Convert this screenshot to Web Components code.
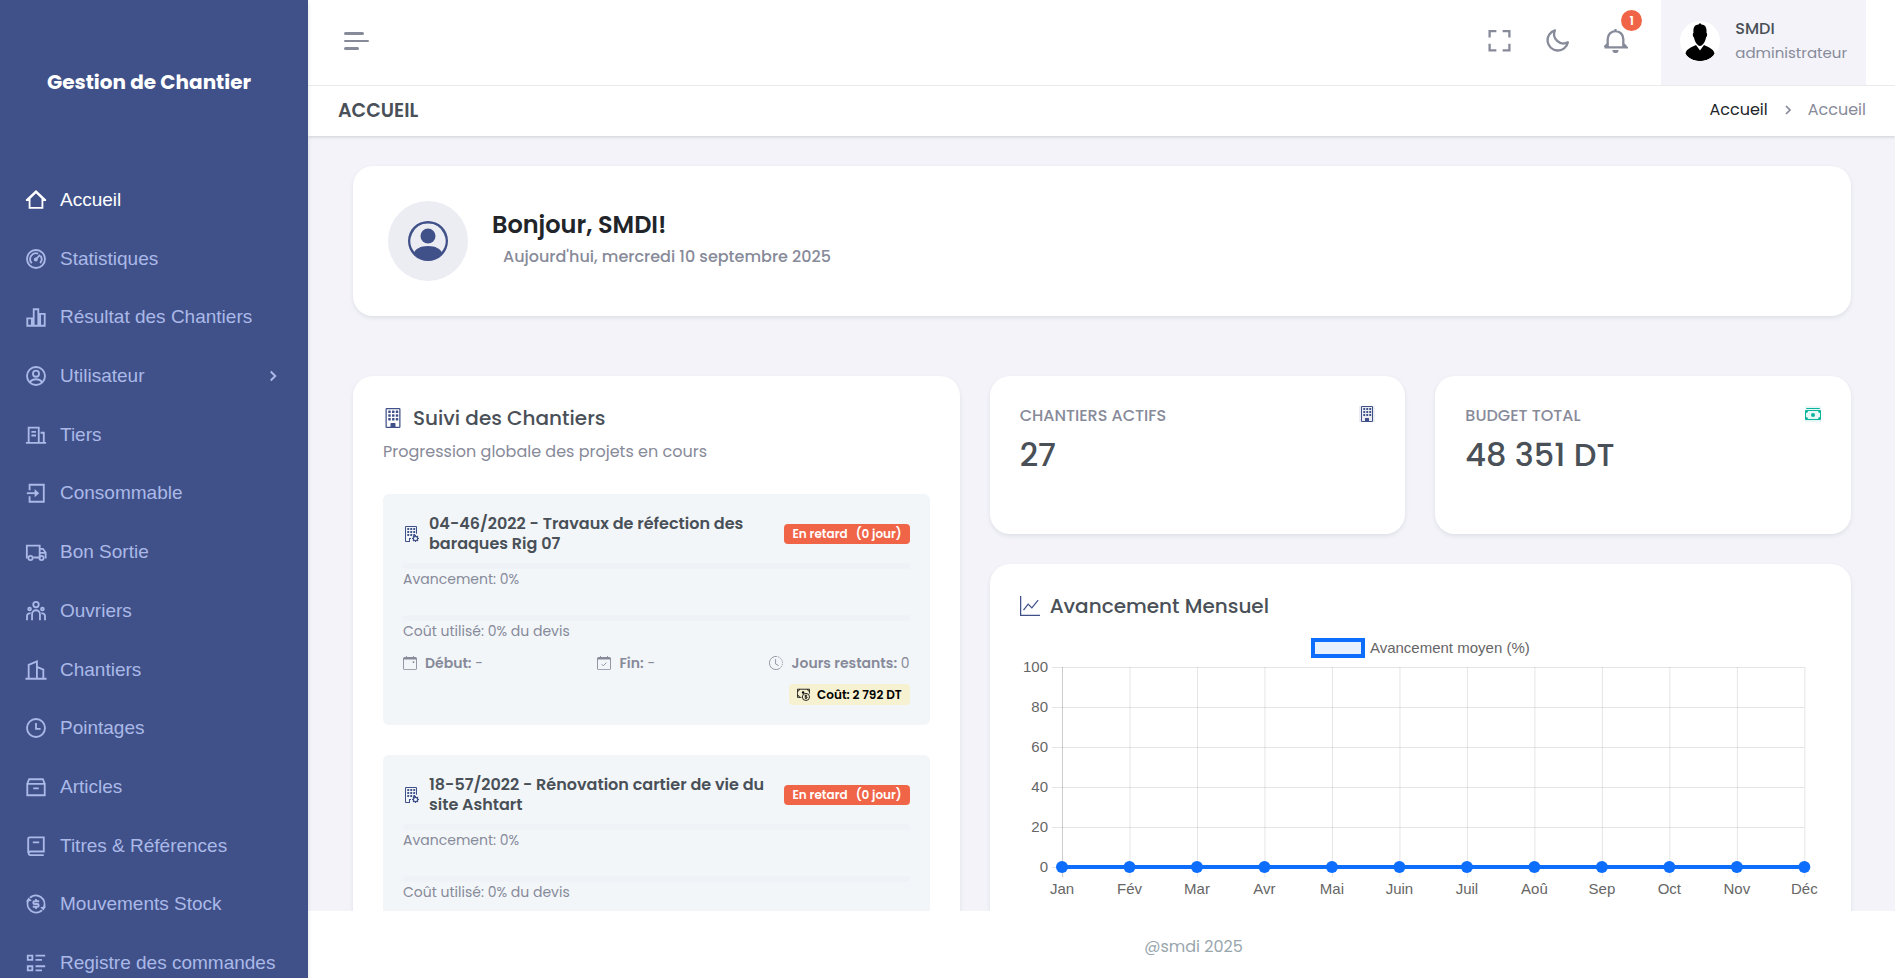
<!DOCTYPE html>
<html lang="fr">
<head>
<meta charset="utf-8">
<meta name="viewport" content="width=device-width, initial-scale=1">
<title>Gestion de Chantier - Accueil</title>
<style>
  :root {
    --primary: #405189;
    --muted: #878a99;
    --heading: #495057;
    --danger: #f06548;
    --success: #0ab39c;
    --surface: #ffffff;
    --page: #f3f3f9;
  }
  html, body { height: 100%; }
  body {
    margin: 0;
    font-family: Poppins, Inter, "Noto Sans", sans-serif;
    font-size: 16px;
    color: #212529;
    background: var(--page);
    overflow: hidden;
  }
</style>
</head>
<body>
<app-shell>
  <side-nav slot="nav" brand="Gestion de Chantier">
    <nav-item icon="home" active>Accueil</nav-item>
    <nav-item icon="dashboard">Statistiques</nav-item>
    <nav-item icon="bars">Résultat des Chantiers</nav-item>
    <nav-item icon="account" expandable>Utilisateur</nav-item>
    <nav-item icon="building4">Tiers</nav-item>
    <nav-item icon="login">Consommable</nav-item>
    <nav-item icon="truck">Bon Sortie</nav-item>
    <nav-item icon="team">Ouvriers</nav-item>
    <nav-item icon="building2">Chantiers</nav-item>
    <nav-item icon="time">Pointages</nav-item>
    <nav-item icon="archive">Articles</nav-item>
    <nav-item icon="book">Titres &amp; Références</nav-item>
    <nav-item icon="exchange">Mouvements Stock</nav-item>
    <nav-item icon="list">Registre des commandes</nav-item>
  </side-nav>

  <top-bar slot="header" user="SMDI" role-name="administrateur" notifications="1"></top-bar>
  <page-title slot="header" heading="ACCUEIL">
    <a slot="crumb" href="#">Accueil</a>
    <span>Accueil</span>
  </page-title>

  <welcome-card heading="Bonjour, SMDI!">Aujourd'hui, mercredi 10 septembre 2025</welcome-card>

  <dash-grid>
    <ui-card slot="main" icon="building" heading="Suivi des Chantiers" subtitle="Progression globale des projets en cours">
      <site-item heading="04-46/2022 - Travaux de réfection des baraques Rig 07" progress="0" spent="0" cost="2 792 DT"></site-item>
      <site-item heading="18-57/2022 - Rénovation cartier de vie du site Ashtart" progress="0" spent="0" cost="0 DT"></site-item>
    </ui-card>
    <stat-card slot="stat" icon="building" label="CHANTIERS ACTIFS">27</stat-card>
    <stat-card slot="stat" icon="cashstack" tone="success" label="BUDGET TOTAL">48 351 DT</stat-card>
    <ui-card slot="side" icon="graph" heading="Avancement Mensuel">
      <line-chart label="Avancement moyen (%)"
        categories="Jan,Fév,Mar,Avr,Mai,Juin,Juil,Aoû,Sep,Oct,Nov,Déc"
        values="0,0,0,0,0,0,0,0,0,0,0,0"></line-chart>
    </ui-card>
  </dash-grid>

  <span slot="footer">@smdi 2025</span>
</app-shell>

<script>
/* Icon set: line icons on a 24 grid, filled icons on a 16 grid. */
const line = (body, w = 2) => `<svg viewBox="0 0 24 24" fill="none" stroke="currentColor" stroke-width="${w}" aria-hidden="true">${body}</svg>`;
const solid = body => `<svg viewBox="0 0 16 16" fill="currentColor" aria-hidden="true">${body}</svg>`;
const windows = [4.2, 7.2, 10.2].map(x => [2, 5, 8].map(y => `<rect x="${x}" y="${y}" width="2" height="2" rx=".4"/>`).join('')).join('');

const ICONS = {
  home: line('<path d="M5 20.500V10.200L12 3.500l7 6.700V20.500z"/><path d="M1 12.200H5M19 12.200h4M2 11.800L12 2.400l10 9.400"/>'),
  dashboard: line('<circle cx="12" cy="12" r="9.800"/><path d="M7.500 16.500a6.300 6.300 0 0 1 7-10.200M16.900 8.600a6.300 6.300 0 0 1-.4 7.900"/><path d="M11 13.200l5.500-5.700"/><circle cx="11.800" cy="12.500" r="1.200" fill="currentColor"/>'),
  bars: line('<path d="M2.500 13.500h5v8h-5zM9.500 3.500h5v18h-5zM16.500 8.500h5v13h-5z"/>'),
  account: line('<circle cx="12" cy="12" r="9.800"/><circle cx="12" cy="9.500" r="3.300"/><path d="M5.500 18.500c3-4 10-4 13 0"/>'),
  building4: line('<path d="M1 20.500h22M4 20V4h11v16M17 9.500h3.500V20M7 8.500h5M7 12.500h5"/>'),
  login: line('<path d="M5 9V3h15.500v18.500H5V15.500"/><path d="M2 12.200h11"/><path d="M10.500 7.700L15.500 12.200l-5 4.500z" fill="currentColor" stroke="none"/>'),
  truck: line('<path d="M3 18H2V5h14v13H9M16 8.500h3.500L22.500 12.500V18h-1M16 13h6"/><circle cx="6" cy="18.500" r="2.300"/><circle cx="18" cy="18.500" r="2.300"/>'),
  team: line('<circle cx="12" cy="5" r="3"/><path d="M7.700 22v-6.500a4.300 4.300 0 0 1 8.600 0V22"/><circle cx="5" cy="9.800" r="1.500"/><circle cx="19" cy="9.800" r="1.500"/><path d="M2.200 22v-4.500a3 3 0 0 1 4-2.800M21.800 22v-4.500a3 3 0 0 0-4-2.800"/>'),
  building2: line('<path d="M.5 21.500h23M4 21V6.500l9-4V21M13 8.500l7 3V21"/>'),
  time: line('<circle cx="12" cy="12" r="9.800"/><path d="M12 6.500V13h5"/>'),
  archive: line('<path d="M2.500 8.500V21h19V8.500zM2.500 8.500l2-5h15l2 5M9 13.500h6"/>'),
  book: line('<path d="M3.500 19.500V4A1.500 1.500 0 0 1 5 2.500H20.500V18H6a2 2 0 0 0 0 4h14.500M8.500 8h7"/>'),
  exchange: line('<path d="M5.400 5.200a9.500 9.500 0 0 1 15.200 10.600M18.600 18.800A9.500 9.500 0 0 1 3.400 8.200"/><path d="M1 9.500L3.800 5l3.600 3.500zM23 14.500l-2.800 4.500-3.600-3.500z" fill="currentColor" stroke="none"/><path d="M15.500 9H10.500a1.500 1.500 0 0 0 0 3h3a1.500 1.500 0 0 1 0 3H8.500M12 6.500V9M12 15v2.500"/>'),
  list: line('<path d="M3 4h5v4.500H3zM3 15.500h5V20H3z"/><path d="M11.500 4H22M11.500 8.500h7M11.500 15.500H22M11.500 20h7"/>'),
  chevron: line('<path d="M9 6l6 6-6 6"/>', 2.6),
  fullscreen: line('<path d="M2.500 9V3H9M15 3h6.500v6M21.500 15v6.500H15M9 21.500H2.500V15"/>', 2.2),
  moon: line('<path d="M9.500 2.200A9.900 9.900 0 1 0 22 13.700 A9 9 0 0 1 9.500 2.200z" stroke-linejoin="round"/>', 2.2),
  bell: line('<path d="M4.500 18V10.500a7.500 7.500 0 0 1 15 0V18M1.500 18.500h21l-2.500-3M1.500 18.500L4 15.500M12 1V3.500"/><path d="M9 21h6a3 3 0 0 1-6 0z" fill="currentColor" stroke="none"/>', 2.2),
  building: solid(windows + '<path fill-rule="evenodd" d="M3 0h10a1 1 0 0 1 1 1v14a1 1 0 0 1-1 1H3a1 1 0 0 1-1-1V1a1 1 0 0 1 1-1zm0 1v14h3v-2.500a.5.5 0 0 1 .5-.5h3a.5.5 0 0 1 .5.5V15h3V1z"/><path d="M6.500 12h3v3h-3z"/>'),
  buildinggear: solid(windows + '<path d="M2 1a1 1 0 0 1 1-1h10a1 1 0 0 1 1 1v6.800h-1V1H3v14h3v-3h2v1H7v3H3a1 1 0 0 1-1-1z"/><circle cx="12.500" cy="12.500" r="2.200" fill="none" stroke="currentColor" stroke-width="1.200"/><path fill="none" stroke="currentColor" stroke-width="1.100" d="M12.500 9v1.300M12.500 14.700V16M9 12.500h1.300M14.700 12.500H16M10 10l1 1M14 14l1 1M15 10l-1 1M11 14l-1 1"/>'),
  calendar: solid('<path fill-rule="evenodd" d="M3.500 0h1v1h7V0h1v1H14a2 2 0 0 1 2 2v11a2 2 0 0 1-2 2H2a2 2 0 0 1-2-2V3a2 2 0 0 1 2-2h1.500zM1 4v10a1 1 0 0 0 1 1h12a1 1 0 0 0 1-1V4z"/><rect x="11" y="6" width="2" height="2" rx=".5"/>'),
  calendarcheck: solid('<path fill-rule="evenodd" d="M3.500 0h1v1h7V0h1v1H14a2 2 0 0 1 2 2v11a2 2 0 0 1-2 2H2a2 2 0 0 1-2-2V3a2 2 0 0 1 2-2h1.500zM1 4v10a1 1 0 0 0 1 1h12a1 1 0 0 0 1-1V4z"/><path fill="none" stroke="currentColor" d="M5.300 9.300l1.900 1.900 3.500-3.700"/>'),
  clock: solid('<g fill="none" stroke="currentColor"><path d="M8 .5a7.500 7.500 0 1 0 5.300 12.800"/><path d="M8 .5a7.500 7.500 0 0 1 5.300 12.800" stroke-dasharray="1.500 1"/><path d="M7.500 3.500V9l3.500 2"/></g>'),
  cashcoin: solid('<g fill="none" stroke="currentColor"><circle cx="11" cy="11" r="4.400"/><path d="M.5 9A2.500 2.500 0 0 1 3 11.500M3 1.500A2.500 2.500 0 0 1 .5 4M13 1.500A2.500 2.500 0 0 0 15.500 4M5.500 11.500h-5v-10h15V7M12.500 9.500c-1-1-3-.6-3 .4s3 .6 3 1.700-2 1.500-3 .5M11 8.400v5.200"/></g><circle cx="7.500" cy="5.500" r="1.500"/>'),
  cashstack: solid('<path d="M1 3a1 1 0 0 1 1-1h12a1 1 0 0 1 1 1z"/><circle cx="8" cy="9" r="2"/><path fill-rule="evenodd" d="M0 5a1 1 0 0 1 1-1h14a1 1 0 0 1 1 1v8a1 1 0 0 1-1 1H1a1 1 0 0 1-1-1zm3 0a2 2 0 0 1-2 2v4a2 2 0 0 1 2 2h10a2 2 0 0 1 2-2V7a2 2 0 0 1-2-2z"/>'),
  graph: solid('<path d="M0 0h1v15h15v1H0z"/><path fill="none" stroke="currentColor" d="M2.800 11.300L6.500 6.500l3 3L14.500 3.300"/>'),
  person: solid('<path d="M11 6a3 3 0 1 1-6 0 3 3 0 0 1 6 0"/><path fill-rule="evenodd" d="M0 8a8 8 0 1 1 16 0A8 8 0 0 1 0 8m8-7a7 7 0 0 0-5.468 11.370C3.242 11.226 4.805 10 8 10s4.757 1.225 5.468 2.370A7 7 0 0 0 8 1"/>')
};

const esc = s => (s || '').replace(/&/g, '&amp;').replace(/</g, '&lt;').replace(/"/g, '&quot;');

/* Base class: renders template() into an open shadow root. */
class Base extends HTMLElement {
  connectedCallback() {
    if (this.shadowRoot) return;
    this.attachShadow({ mode: 'open' }).innerHTML = this.template();
  }
  at(name) { return esc(this.getAttribute(name)); }
}

customElements.define('ui-icon', class extends Base {
  template() {
    return `<style>
      :host { display: inline-block; flex: none; width: 22px; height: 22px; }
      svg { display: block; width: 100%; height: 100%; }
    </style>${ICONS[this.getAttribute('name')]}`;
  }
});

customElements.define('app-shell', class extends Base {
  template() {
    return `<style>
      :host { display: grid; grid-template-columns: 308px minmax(0, 1fr); height: 100vh; }
      .nav { min-height: 0; overflow: hidden; background: var(--primary); box-shadow: 0 2px 4px rgba(15, 34, 58, .12); z-index: 1; }
      .page { display: flex; flex-direction: column; min-height: 0; }
      header { position: relative; background: var(--surface); box-shadow: 0 1px 3px rgba(56, 65, 74, .2); }
      main { flex: 1; min-height: 0; overflow: auto; scrollbar-width: none; padding: 30px 44px 30px 45px; }
      footer { padding: 26px 0 21px 184px; background: var(--surface); color: #98a6ad; line-height: 20px; text-align: center; }
    </style>
    <div class="nav"><slot name="nav"></slot></div>
    <div class="page">
      <header><slot name="header"></slot></header>
      <main><slot></slot></main>
      <footer><slot name="footer"></slot></footer>
    </div>`;
  }
});

customElements.define('side-nav', class extends Base {
  template() {
    return `<style>
      :host { display: block; color: #fff; }
      .brand { display: block; padding: 66px 24px 80px 47px; color: #fff; font-size: 20px; font-weight: 700; line-height: 32px; text-decoration: none; white-space: nowrap; }
      nav { display: flex; flex-direction: column; justify-content: space-between; min-height: 807px; }
    </style>
    <a class="brand" href="#">${this.at('brand')}</a>
    <nav><slot></slot></nav>`;
  }
});

customElements.define('nav-item', class extends Base {
  template() {
    const more = this.hasAttribute('expandable') ? '<ui-icon class="more" name="chevron"></ui-icon>' : '';
    return `<style>
      :host { display: block; font-family: Arial, "Liberation Sans", sans-serif; font-size: 19px; --ink: #abb9e8; }
      :host([active]) { --ink: #fff; }
      a { display: flex; align-items: center; height: 44px; padding: 0 26px 0 25px; color: var(--ink); text-decoration: none; }
      .label { flex: 1; margin-left: 13px; white-space: nowrap; }
      .more { width: 18px; height: 18px; }
    </style>
    <a href="#"><ui-icon name="${this.at('icon')}"></ui-icon><span class="label"><slot></slot></span>${more}</a>`;
  }
});

customElements.define('top-bar', class extends Base {
  template() {
    return `<style>
      :host { display: flex; align-items: stretch; height: 85px; padding: 0 29px 0 36px; border-bottom: 1px solid #e9ebec; color: var(--muted); }
      button { padding: 0; border: 0; background: none; color: inherit; font: inherit; cursor: pointer; }
      .menu { display: grid; gap: 5px; align-content: center; width: 26px; padding-bottom: 3px; }
      .menu i { height: 3px; border-radius: 2px; background: var(--muted); }
      .menu i:nth-child(1) { width: 20px; }
      .menu i:nth-child(2) { height: 2px; width: 25px; }
      .menu i:nth-child(3) { width: 15px; }
      .tools { display: flex; align-items: center; gap: 10px; margin-left: auto; margin-right: 22px; padding-bottom: 5px; }
      .tool { display: grid; place-items: center; position: relative; width: 48px; height: 48px; }
      .tool ui-icon { width: 25px; height: 25px; }
      .count { position: absolute; top: -6px; right: -3px; width: 21px; height: 21px; border-radius: 50%; background: var(--danger); color: #fff; font-size: 12px; font-weight: 600; line-height: 21px; text-align: center; }
      .user { display: flex; align-items: center; gap: 15px; padding: 0 19px; background: var(--page); text-align: left; line-height: 24px; }
      .avatar { width: 40px; height: 40px; margin-bottom: 3px; border-radius: 50%; background: #fff; }
      .who { display: grid; margin-bottom: 4px; }
      .name { color: var(--heading); font-size: 16px; font-weight: 500; }
      .role { font-size: 15px; }
    </style>
    <button class="menu" type="button" aria-label="Menu"><i></i><i></i><i></i></button>
    <div class="tools">
      <button class="tool" type="button" aria-label="Plein écran"><ui-icon name="fullscreen"></ui-icon></button>
      <button class="tool" type="button" aria-label="Mode sombre"><ui-icon name="moon"></ui-icon></button>
      <button class="tool" type="button" aria-label="Notifications"><ui-icon name="bell"></ui-icon><span class="count">${this.at('notifications')}</span></button>
    </div>
    <button class="user" type="button">
      <svg class="avatar" viewBox="0 0 40 40" aria-hidden="true"><path d="M20 2l1.500 1.500c4.200.5 5.500 3.500 5 8.500 1 0 .8 3.500-.5 4.500-.6 4-3.400 8.500-6 8.500s-5.400-4.500-6-8.500c-1.300-1-1.500-4.500-.5-4.500-.5-5 .8-8.500 5-8.500z"/><path d="M16 24l4 5.500 4-5.500c4 2 9.500 3.500 10.500 8.500C32 37.500 26 40 20 40S8 37.500 5.500 32.500C6.500 27.500 12 26 16 24z"/></svg>
      <span class="who"><span class="name">${this.at('user')}</span><span class="role">${this.at('role-name')}</span></span>
    </button>`;
  }
});

customElements.define('page-title', class extends Base {
  template() {
    return `<style>
      :host { display: flex; align-items: center; justify-content: space-between; height: 50px; padding: 0 29px 0 30px; }
      h1 { margin: 0; color: var(--heading); font-size: 19px; font-weight: 600; line-height: 24px; }
      nav { display: flex; align-items: center; gap: 12px; padding-bottom: 2px; color: var(--muted); line-height: 24px; }
      ::slotted(a) { color: #212529; text-decoration: none; }
      ui-icon { width: 16px; height: 16px; }
    </style>
    <h1>${this.at('heading')}</h1>
    <nav aria-label="Fil d'Ariane"><slot name="crumb"></slot><ui-icon name="chevron"></ui-icon><slot></slot></nav>`;
  }
});

const CARD = 'border-radius: 20px; background: var(--surface); box-shadow: 0 2px 4px rgba(56, 65, 74, .1);';

customElements.define('welcome-card', class extends Base {
  template() {
    return `<style>
      :host { display: flex; align-items: center; gap: 24px; padding: 35px; margin-bottom: 60px; ${CARD} }
      .face { display: grid; place-items: center; width: 80px; height: 80px; border-radius: 50%; background: #ecedf3; color: var(--primary); }
      .face ui-icon { width: 40px; height: 40px; }
      h2 { margin: 0; font-size: 24px; font-weight: 600; line-height: 32px; }
      p { margin: 0 0 0 11px; color: var(--muted); font-weight: 500; line-height: 32px; }
    </style>
    <div class="face"><ui-icon name="person"></ui-icon></div>
    <div><h2>${this.at('heading')}</h2><p><slot></slot></p></div>`;
  }
});

customElements.define('dash-grid', class extends Base {
  template() {
    return `<style>
      :host { display: grid; grid-template-columns: repeat(12, minmax(0, 1fr)); gap: 30px; align-items: start; }
      .main { grid-column: span 5; }
      .side { grid-column: span 7; display: grid; gap: 30px; }
      .stats { display: grid; grid-template-columns: 1fr 1fr; gap: 30px; }
    </style>
    <div class="main"><slot name="main"></slot></div>
    <div class="side"><div class="stats"><slot name="stat"></slot></div><slot name="side"></slot></div>`;
  }
});

customElements.define('ui-card', class extends Base {
  template() {
    const sub = this.hasAttribute('subtitle') ? `<p>${this.at('subtitle')}</p>` : '';
    return `<style>
      :host { display: block; padding: 30px; ${CARD} }
      h3 { display: flex; align-items: center; gap: 10px; margin: 0; color: var(--heading); font-size: 20px; font-weight: 500; line-height: 24px; }
      h3 ui-icon { width: 20px; height: 20px; color: var(--primary); }
      p { margin: 10px 0 0; color: var(--muted); line-height: 24px; }
      .body { display: grid; gap: 30px; }
      p + .body { margin-top: 30px; }
    </style>
    <h3><ui-icon name="${this.at('icon')}"></ui-icon>${this.at('heading')}</h3>${sub}
    <div class="body"><slot></slot></div>`;
  }
});

customElements.define('site-item', class extends Base {
  template() {
    const bar = (v, name) => `<div class="bar" role="progressbar" aria-label="${name}" aria-valuenow="${v}" aria-valuemin="0" aria-valuemax="100"><i style="width:${v}%"></i></div>`;
    return `<style>
      :host { display: block; padding: 20px; border-radius: 6px; background: #f2f6f9; color: var(--muted); font-size: 14px; line-height: 20px; }
      .top { display: flex; align-items: center; gap: 10px; margin-bottom: 9px; }
      .top ui-icon { width: 16px; height: 16px; color: var(--primary); }
      h4 { flex: 1; margin: 0; color: var(--heading); font-size: 16px; font-weight: 600; line-height: 20px; }
      .late { display: flex; gap: 8px; padding: 0 8px; border-radius: 4px; background: var(--danger); color: #fff; font-size: 12px; font-weight: 600; white-space: nowrap; }
      .bar { height: 6px; border-radius: 3px; background: #eff2f7; overflow: hidden; }
      .bar i { display: block; height: 100%; background: var(--primary); }
      p { margin: 0 0 26px; }
      .bar ~ .bar + p { margin-bottom: 12px; }
      .meta { display: flex; justify-content: space-between; margin-bottom: 11px; }
      .fact { display: flex; align-items: center; gap: 8px; }
      .meta ui-icon { width: 14px; height: 14px; }
      b { font-weight: 600; }
      .cost { display: flex; align-items: center; gap: 7px; width: max-content; margin-left: auto; padding: 0 8px; border-radius: 4px; background: #f6f1d1; color: #000; font-size: 12px; font-weight: 600; line-height: 21px; }
      .cost ui-icon { width: 13px; height: 13px; }
    </style>
    <div class="top"><ui-icon name="buildinggear"></ui-icon><h4>${this.at('heading')}</h4><span class="late"><span>En retard</span><span>(0 jour)</span></span></div>
    ${bar(this.at('progress'), 'Avancement')}<p>Avancement: ${this.at('progress')}%</p>
    ${bar(this.at('spent'), 'Coût utilisé')}<p>Coût utilisé: ${this.at('spent')}% du devis</p>
    <div class="meta">
      <span class="fact"><ui-icon name="calendar"></ui-icon><span><b>Début:</b> -</span></span>
      <span class="fact"><ui-icon name="calendarcheck"></ui-icon><span><b>Fin:</b> -</span></span>
      <span class="fact"><ui-icon name="clock"></ui-icon><span><b>Jours restants:</b> 0</span></span>
    </div>
    <div class="cost"><ui-icon name="cashcoin"></ui-icon>Coût: ${this.at('cost')}</div>`;
  }
});

customElements.define('stat-card', class extends Base {
  template() {
    return `<style>
      :host { display: block; min-height: 98px; padding: 30px; ${CARD} --tone: var(--primary); --wash: #ecedf3; }
      :host([tone=success]) { --tone: var(--success); --wash: #e7f7f5; }
      .row { display: flex; align-items: flex-start; justify-content: space-between; color: var(--muted); font-size: 16px; font-weight: 500; line-height: 20px; }
      .row ui-icon { width: 16px; height: 16px; color: var(--tone); background: var(--wash); }
      strong { display: block; margin-top: 9px; color: var(--heading); font-size: 32px; font-weight: 500; line-height: 40px; }
    </style>
    <div class="row"><span>${this.at('label')}</span><ui-icon name="${this.at('icon')}"></ui-icon></div>
    <strong><slot></slot></strong>`;
  }
});

/* Line chart on a 0-100 scale; horizontal positions are percentages so the plot follows its card. */
customElements.define('line-chart', class extends Base {
  template() {
    const names = this.getAttribute('categories').split(',');
    const vals = this.getAttribute('values').split(',').map(Number);
    const H = 200, X = i => i * 100 / (names.length - 1) + '%', Y = v => H - v * H / 100;
    let g = '';
    for (let v = 0; v <= 100; v += 20)
      g += `<rect class="grid" x="0" y="${Y(v)}" width="100%" height="1"/><rect class="grid" x="-10" y="${Y(v)}" width="10" height="1"/><text class="y" x="-14" y="${Y(v) + 5}">${v}</text>`;
    names.forEach((n, i) => {
      g += `<svg x="${X(i)}" y="0" overflow="visible"><rect class="${i ? 'grid' : 'axis'}" x="0" y="0" width="1" height="${H + 10}"/><text class="x" x="0" y="${H + 27}">${n}</text></svg>`;
    });
    let s = '';
    vals.forEach((v, i) => {
      if (i) s += `<line x1="${X(i - 1)}" y1="${Y(vals[i - 1])}" x2="${X(i)}" y2="${Y(v)}"/>`;
      s += `<circle cx="${X(i)}" cy="${Y(v)}" r="6"/>`;
    });
    return `<style>
      :host { display: block; padding-bottom: 24px; color: #666; font-family: Arial, "Liberation Sans", sans-serif; font-size: 15px; }
      .legend { display: flex; align-items: center; justify-content: center; gap: 5px; margin: 19px 0 8px; line-height: 22px; }
      .legend i { box-sizing: border-box; width: 54px; height: 20px; border: 4px solid #0d6efd; background: #e7f0ff; }
      .plot { display: block; height: 240px; margin: 0 17px 0 42px; }
      svg.root { display: block; width: 100%; height: 240px; overflow: visible; }
      .grid { fill: rgba(0, 0, 0, .1); }
      .axis { fill: rgba(0, 0, 0, .2); }
      text { fill: #666; }
      .y { text-anchor: end; }
      .x { text-anchor: middle; }
      line { stroke: #0d6efd; stroke-width: 4; }
      circle { fill: #0d6efd; }
    </style>
    <div class="legend"><i></i><span>${this.at('label')}</span></div>
    <div class="plot"><svg class="root" role="img" aria-label="${this.at('label')}">${g}${s}</svg></div>`;
  }
});
</script>
</body>
</html>
